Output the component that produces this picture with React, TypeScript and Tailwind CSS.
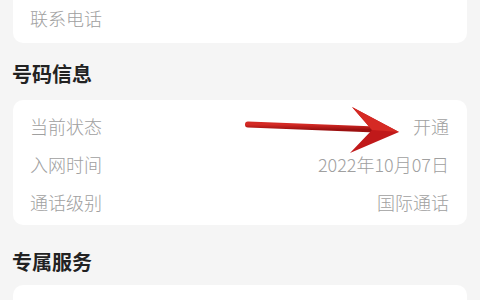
import React from "react";

const FONT = { fontFamily: '"Noto Sans CJK SC", "Noto Sans", sans-serif' };

interface InfoRow {
  label: string;
  value: string;
}

const NUMBER_INFO: InfoRow[] = [
  { label: "当前状态", value: "开通" },
  { label: "入网时间", value: "2022年10月07日" },
  { label: "通话级别", value: "国际通话" },
];

function Arrow() {
  return (
    <svg
      className="absolute left-0 top-0 pointer-events-none"
      width={480}
      height={300}
      viewBox="0 0 480 300"
    >
      <defs>
        <linearGradient id="shaft" x1="0" y1="0" x2="0" y2="1">
          <stop offset="0" stopColor="#d42a25" />
          <stop offset="1" stopColor="#9c1010" />
        </linearGradient>
      </defs>
      <path
        d="M248 124.5 L376 129.5"
        stroke="url(#shaft)"
        strokeWidth={6}
        strokeLinecap="round"
      />
      <polygon points="352,107 399,132 350,153 372,130" fill="#c0191a" />
      <polygon points="352,107 399,132 372,130" fill="#d52a24" />
    </svg>
  );
}

export default function App() {
  return (
    <div className="relative w-[480px] h-[300px] overflow-hidden bg-[#f5f5f5]" style={FONT}>
      {/* contact card, cut off at top */}
      <div className="mx-[13px] h-[43px] bg-white rounded-b-[10px] flex items-end pb-[15px] pl-[17px]">
        <span className="text-[18px] leading-[20px] font-light text-[#a0a0a0]">联系电话</span>
      </div>

      <div className="pl-[12px] mt-[17px] mb-[12px] h-[28px] flex items-center">
        <h2 className="text-[20px] font-bold text-[#222]">号码信息</h2>
      </div>

      <div className="mx-[13px] bg-white rounded-[10px] pt-[7px] pb-[4px] pl-[17px] pr-[18px]">
        {NUMBER_INFO.map((row) => (
          <div key={row.label} className="h-[38px] flex items-center justify-between">
            <span className="text-[18px] font-light text-[#a0a0a0]">{row.label}</span>
            <span className="text-[18px] font-light text-[#a0a0a0]">{row.value}</span>
          </div>
        ))}
      </div>

      <div className="pl-[12px] mt-[23px] mb-[9px] h-[28px] flex items-center">
        <h2 className="text-[20px] font-bold text-[#222]">专属服务</h2>
      </div>

      <div className="mx-[13px] h-[60px] bg-white rounded-[10px]" />

      <Arrow />
    </div>
  );
}
